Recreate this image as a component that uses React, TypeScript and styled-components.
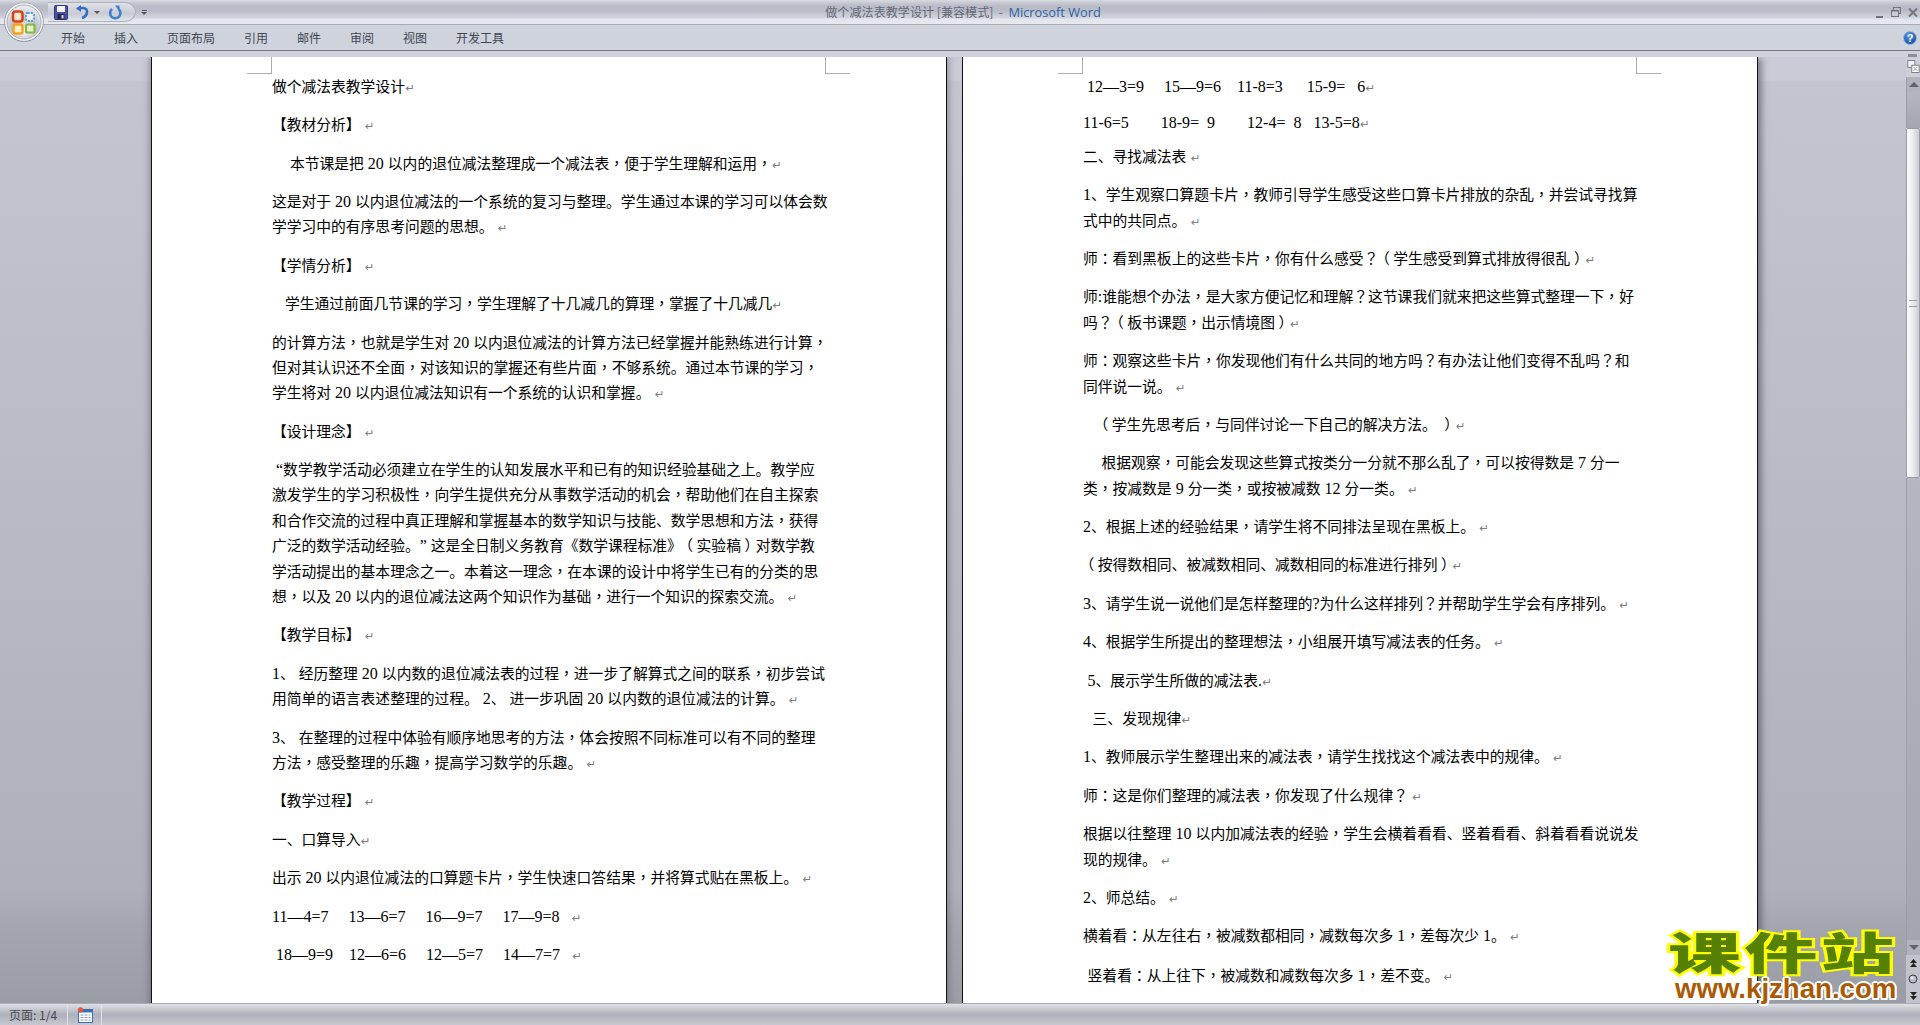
import React from "react";
import styled, { createGlobalStyle } from "styled-components";

const Global = createGlobalStyle`
  html, body { margin: 0; padding: 0; height: 100%; overflow: hidden; background: #c9ccd6; }
  #root { height: 100%; }
`;

const UI_FONT = `"Noto Sans CJK SC", "Noto Sans", sans-serif`;

const Window = styled.div`
  position: relative;
  height: 100vh;
  display: flex;
  flex-direction: column;
  overflow: hidden;
  font-family: ${UI_FONT};
`;

const TitleBar = styled.header`
  height: 24px;
  flex: none;
  display: grid;
  grid-template-columns: 1fr auto 1fr;
  align-items: center;
  border-bottom: 1px solid #a9abb3;
  background: linear-gradient(#d8dae1 0, #c6c9d2 3px, #b9bcc7 6px, #babdc8 11px, #c9ccd6 15px, #d2d5de 18px, #e3e6ed 19px, #e6e8ef 24px);
`;

const QuickBar = styled.div`
  display: flex;
  align-items: center;
  height: 20px;
  margin-left: 48px;
`;

const QuickPill = styled.div`
  width: 88px;
  height: 20px;
  box-sizing: border-box;
  padding-left: 6px;
  display: flex;
  align-items: center;
  border: 1px solid #b0b3bd;
  border-left: 0;
  border-radius: 0 11px 11px 0 / 0 10px 10px 0;
  background: linear-gradient(#dfe1e8, #ccced8 50%, #c9ccd5 60%, #e4e6ec);
`;

const QuickGap = styled.span<{ $size: number }>`
  flex: none;
  width: ${(p) => p.$size}px;
`;

const TinyCaret = styled.span<{ $left?: number }>`
  display: block;
  width: 0;
  height: 0;
  margin-left: ${(p) => p.$left ?? 0}px;
  border-left: 3px solid transparent;
  border-right: 3px solid transparent;
  border-top: 3px solid #555;
`;

const CustomizeMark = styled.div`
  margin-left: 5px;
  display: flex;
  flex-direction: column;
  align-items: center;
  gap: 1px;
  &::before {
    content: "";
    width: 5px;
    height: 1px;
    background: #555;
  }
`;

const TitleText = styled.div`
  padding-left: 6px;
  font-size: 12.1px;
  line-height: 24px;
  color: #626874;
  white-space: pre;
`;

const AppName = styled.span`
  font-family: "Open Sans", sans-serif;
  font-size: 12.8px;
  color: #2e63a4;
`;

const WindowControls = styled.div`
  justify-self: end;
  display: flex;
  align-items: center;
  gap: 7px;
  padding-right: 2px;
  height: 24px;
`;

const TabRow = styled.nav`
  height: 26px;
  flex: none;
  box-sizing: border-box;
  display: flex;
  align-items: center;
  gap: 29px;
  padding: 0 3px 0 61px;
  background: #cfd3dc;
  border-bottom: 1px solid #75777d;
`;

const Tab = styled.span`
  font-size: 12px;
  color: #3f4652;
  line-height: 26px;
`;

const HelpButton = styled.div`
  margin-left: auto;
  width: 14px;
  height: 14px;
  border-radius: 50%;
  border: 1px solid #8fb4e4;
  box-sizing: border-box;
  background: radial-gradient(circle at 40% 30%, #5d9be6, #1c57ae 70%);
  color: #fff;
  font: bold 11px/12px "Liberation Sans", sans-serif;
  text-align: center;
`;

const RibbonFoot = styled.div`
  height: 6px;
  flex: none;
  display: flex;
  justify-content: flex-end;
  align-items: flex-end;
  padding-right: 3px;
  background: #cfd2da;
`;

const SplitDash = styled.div`
  width: 9px;
  height: 3px;
  background: #8b8e96;
`;

const Main = styled.main`
  flex: 1;
  min-height: 0;
  display: flex;
`;

const Workspace = styled.section`
  flex: 1;
  min-width: 0;
  display: flex;
  justify-content: center;
  gap: 15px;
  padding-left: 3px;
  overflow: hidden;
  background: linear-gradient(#c9ccd6 0, #c9ccd6 23px, #c3c6d0 24px, #aeb0bb 88%, #a3a5af 92%, #9a9ca6 100%);
`;

const Page = styled.article<{ $shadow: string }>`
  position: relative;
  flex: none;
  width: 796px;
  min-height: 960px;
  box-sizing: border-box;
  padding: 17.8px 119px 0 120px;
  background: #fff;
  border: solid #111;
  border-width: 0 1px;
  box-shadow: ${(p) => p.$shadow};
  font-family: "Liberation Serif", "Noto Sans CJK SC", serif;
  font-size: 14.78px;
  line-height: 25.4px;
  color: #000;
  text-spacing-trim: space-all;
  text-autospace: no-autospace;
`;

const CropMark = styled.i<{ $side: "left" | "right" }>`
  position: absolute;
  top: 0;
  left: ${(p) => (p.$side === "left" ? 95 : 673)}px;
  width: 24px;
  height: 16px;
  border-bottom: 1px solid #a9adb4;
  ${(p) => (p.$side === "left" ? "border-right" : "border-left")}: 1px solid #a9adb4;
`;

const Para = styled.div<{ $gap: number }>`
  margin-bottom: ${(p) => p.$gap}px;
`;

const Line = styled.div<{ $indent: number }>`
  white-space: pre;
  height: 25.4px;
  padding-left: ${(p) => p.$indent}px;
`;

const Latin = styled.span`
  font-size: 16px;
  line-height: 0;
`;

/* Word draws these full-width marks in the middle of their cell */
const CentredMark = styled.span`
  font-family: "Noto Sans CJK TC", "Noto Sans CJK SC", serif;
  line-height: 0;
`;

const Paren = styled.span<{ $shift: number }>`
  display: inline-block;
  line-height: 0;
  transform: translateX(${(p) => p.$shift}px);
`;

const Mark = styled.span`
  font-family: "DejaVu Sans", sans-serif;
  font-size: 11.5px;
  line-height: 0;
  color: #7d7d7d;
`;

const ScrollRail = styled.aside`
  flex: none;
  width: 14px;
  display: flex;
  flex-direction: column;
  background: #ccd0d8;
`;

const RulerButton = styled.div`
  flex: none;
  height: 17px;
  margin-top: 3px;
  display: flex;
  justify-content: center;
  align-items: flex-start;
`;

const ArrowBox = styled.div<{ $dir: "up" | "down" }>`
  flex: none;
  height: 15px;
  display: flex;
  justify-content: center;
  align-items: center;
  background: #b0b3be;
  border-left: 1px solid #9b9ea9;
  &::after {
    content: "";
    border-left: 5px solid transparent;
    border-right: 5px solid transparent;
    ${(p) => (p.$dir === "up" ? "border-bottom" : "border-top")}: 5px solid #5f626b;
  }
`;

const Track = styled.div<{ $size?: number }>`
  flex: ${(p) => (p.$size ? `none` : 1)};
  height: ${(p) => (p.$size ? `${p.$size}px` : "auto")};
  border-left: 1px solid #9b9ea9;
  background: linear-gradient(#b4b7c2, #a3a5b0);
`;

const Thumb = styled.div`
  flex: none;
  height: 350px;
  box-sizing: border-box;
  display: flex;
  align-items: center;
  justify-content: center;
  border: 1px solid #9a9da6;
  border-radius: 2px;
  background: linear-gradient(90deg, #fdfdfe, #eceef2 45%, #c9ccd4);
  &::after {
    content: "";
    width: 8px;
    height: 5px;
    border: solid #9a9da6;
    border-width: 1px 0;
  }
`;

const NavButton = styled.div`
  flex: none;
  height: 16px;
  display: flex;
  justify-content: center;
  align-items: center;
  background: #c0c3cc;
`;

const StatusBar = styled.footer`
  flex: none;
  height: 22px;
  box-sizing: border-box;
  display: flex;
  border-top: 1px solid #a9abb2;
  background: linear-gradient(#dfe1e6, #c6c8d0 25%, #aeb0bb 50%, #b6b8c3 70%, #c6c8d1);
`;

const StatusItem = styled.div<{ $width: number }>`
  width: ${(p) => p.$width}px;
  box-sizing: border-box;
  padding-left: 9px;
  display: flex;
  align-items: center;
  border-right: 1px solid #e1e3e8;
  font-size: 12px;
  color: #464a52;
  white-space: pre;
`;

const OfficeButton = styled.div`
  position: absolute;
  left: 4px;
  top: 2px;
  width: 40px;
  height: 40px;
`;

const Watermark = styled.div`
  position: absolute;
  left: 1668px;
  top: 925px;
  width: 240px;
  pointer-events: none;
`;

const WatermarkTitle = styled.div`
  width: 140px;
  height: 53px;
  transform: scaleX(1.66);
  transform-origin: 0 0;
  font-family: "Noto Sans CJK SC", sans-serif;
  font-weight: 900;
  font-size: 44px;
  line-height: 53px;
  letter-spacing: 2px;
  white-space: pre;
  color: #558000;
  -webkit-text-stroke: 4px #ffff00;
  paint-order: stroke fill;
`;

const WatermarkUrl = styled.div`
  padding-left: 7px;
  font-family: "Liberation Sans", sans-serif;
  font-weight: bold;
  font-size: 27.6px;
  line-height: 22px;
  color: #aa5a05;
  text-shadow: 2px 0 0 #fff, -2px 0 0 #fff, 0 2px 0 #fff, 0 -2px 0 #fff, 1.5px 1.5px 0 #fff, -1.5px 1.5px 0 #fff, 1.5px -1.5px 0 #fff, -1.5px -1.5px 0 #fff;
`;

type P = { lines: string[]; indent?: number; gap?: number };

const LEFT: P[] = [
  { lines: ["做个减法表教学设计"] },
  { lines: ["【教材分析】 "] },
  { lines: ["本节课是把 20 以内的退位减法整理成一个减法表，便于学生理解和运用，"], indent: 18 },
  { lines: ["这是对于 20 以内退位减法的一个系统的复习与整理。学生通过本课的学习可以体会数", "学学习中的有序思考问题的思想。 "] },
  { lines: ["【学情分析】 "] },
  { lines: ["学生通过前面几节课的学习，学生理解了十几减几的算理，掌握了十几减几"], indent: 13 },
  {
    lines: [
      "的计算方法，也就是学生对 20 以内退位减法的计算方法已经掌握并能熟练进行计算，",
      "但对其认识还不全面，对该知识的掌握还有些片面，不够系统。通过本节课的学习，",
      "学生将对 20 以内退位减法知识有一个系统的认识和掌握。 ",
    ],
  },
  { lines: ["【设计理念】 "] },
  {
    lines: [
      " “数学教学活动必须建立在学生的认知发展水平和已有的知识经验基础之上。教学应",
      "激发学生的学习积极性，向学生提供充分从事数学活动的机会，帮助他们在自主探索",
      "和合作交流的过程中真正理解和掌握基本的数学知识与技能、数学思想和方法，获得",
      "广泛的数学活动经验。” 这是全日制义务教育《数学课程标准》（实验稿）对数学教",
      "学活动提出的基本理念之一。本着这一理念，在本课的设计中将学生已有的分类的思",
      "想，以及 20 以内的退位减法这两个知识作为基础，进行一个知识的探索交流。 ",
    ],
  },
  { lines: ["【教学目标】 "] },
  {
    lines: [
      "1、 经历整理 20 以内数的退位减法表的过程，进一步了解算式之间的联系，初步尝试",
      "用简单的语言表述整理的过程。 2、 进一步巩固 20 以内数的退位减法的计算。 ",
    ],
  },
  { lines: ["3、 在整理的过程中体验有顺序地思考的方法，体会按照不同标准可以有不同的整理", "方法，感受整理的乐趣，提高学习数学的乐趣。 "] },
  { lines: ["【教学过程】 "] },
  { lines: ["一、口算导入"] },
  { lines: ["出示 20 以内退位减法的口算题卡片，学生快速口答结果，并将算式贴在黑板上。 "] },
  { lines: ["11—4=7     13—6=7     16—9=7     17—9=8   "] },
  { lines: [" 18—9=9    12—6=6     12—5=7     14—7=7   "] },
];

const RIGHT: P[] = [
  { lines: [" 12—3=9     15—9=6    11-8=3      15-9=   6"], gap: 10.6 },
  { lines: ["11-6=5        18-9=  9        12-4=  8   13-5=8"], gap: 8.6 },
  { lines: ["二、寻找减法表 "] },
  { lines: ["1、学生观察口算题卡片，教师引导学生感受这些口算卡片排放的杂乱，并尝试寻找算", "式中的共同点。 "] },
  { lines: ["师：看到黑板上的这些卡片，你有什么感受？（学生感受到算式排放得很乱）"] },
  { lines: ["师:谁能想个办法，是大家方便记忆和理解？这节课我们就来把这些算式整理一下，好", "吗？（板书课题，出示情境图）"] },
  { lines: ["师：观察这些卡片，你发现他们有什么共同的地方吗？有办法让他们变得不乱吗？和", "同伴说一说。 "] },
  { lines: ["（学生先思考后，与同伴讨论一下自己的解决方法。 ）"], indent: 14 },
  { lines: ["根据观察，可能会发现这些算式按类分一分就不那么乱了，可以按得数是 7 分一", "类，按减数是 9 分一类，或按被减数 12 分一类。 "], indent: 18.4 },
  { lines: ["2、根据上述的经验结果，请学生将不同排法呈现在黑板上。 "] },
  { lines: ["（按得数相同、被减数相同、减数相同的标准进行排列）"] },
  { lines: ["3、请学生说一说他们是怎样整理的?为什么这样排列？并帮助学生学会有序排列。 "] },
  { lines: ["4、根据学生所提出的整理想法，小组展开填写减法表的任务。 "] },
  { lines: ["5、展示学生所做的减法表."], indent: 4.6 },
  { lines: ["三、发现规律"], indent: 9.6 },
  { lines: ["1、教师展示学生整理出来的减法表，请学生找找这个减法表中的规律。 "] },
  { lines: ["师：这是你们整理的减法表，你发现了什么规律？ "] },
  { lines: ["根据以往整理 10 以内加减法表的经验，学生会横着看看、竖着看看、斜着看看说说发", "现的规律。 "] },
  { lines: ["2、师总结。 "] },
  { lines: ["横着看：从左往右，被减数都相同，减数每次多 1，差每次少 1。 "], gap: 14 },
  { lines: ["竖着看：从上往下，被减数和减数每次多 1，差不变。 "], indent: 4.6 },
];

const TABS = ["开始", "插入", "页面布局", "引用", "邮件", "审阅", "视图", "开发工具"];

function Text({ value }: { value: string }) {
  const parts = value.split(/([0-9A-Za-z—=\-?.:“” ]+|[，：？]|[（）])/);
  return (
    <>
      {parts.map((part, i) => {
        if (i % 2 === 0) return part;
        if (/^[，：？]$/.test(part)) return <CentredMark key={i}>{part}</CentredMark>;
        if (part === "（") return <Paren key={i} $shift={-3.5}>{part}</Paren>;
        if (part === "）") return <Paren key={i} $shift={3.5}>{part}</Paren>;
        return <Latin key={i}>{part}</Latin>;
      })}
    </>
  );
}

function Paragraphs({ items }: { items: P[] }) {
  return (
    <>
      {items.map((para, i) => (
        <Para key={i} $gap={para.gap ?? 13}>
          {para.lines.map((line, j) => (
            <Line key={j} $indent={j === 0 ? para.indent ?? 0 : 0}>
              <Text value={line} />
              {j === para.lines.length - 1 && <Mark>↵</Mark>}
            </Line>
          ))}
        </Para>
      ))}
    </>
  );
}

const SaveIcon = () => (
  <svg width="14" height="15" viewBox="0 0 14 15">
    <rect x="0.5" y="0.5" width="13" height="14" rx="1" fill="#4a4fa8" stroke="#33366f" />
    <rect x="3" y="1" width="8" height="6" fill="#f2f3f8" />
    <rect x="3.5" y="9" width="7" height="5.5" fill="#23264f" />
    <rect x="7.5" y="10" width="2" height="3.5" fill="#d5d7e6" />
  </svg>
);

const UndoIcon = () => (
  <svg width="14" height="15" viewBox="0 0 14 15">
    <path d="M6 13 C12 11 13 3 7 3 H3" fill="none" stroke="#2f6fc4" strokeWidth="2.6" />
    <path d="M5 0 V7 L0 3.5 Z" fill="#2f6fc4" />
  </svg>
);

const RedoIcon = () => (
  <svg width="14" height="15" viewBox="0 0 14 15">
    <path d="M4 4 A5.2 5.2 0 1 0 10.5 4" fill="none" stroke="#3f7fd0" strokeWidth="2.6" />
    <path d="M7 0.5 L11.5 0.5 V6.5 Z" fill="#3f7fd0" />
  </svg>
);

const MinIcon = () => (
  <svg width="8" height="13" viewBox="0 0 8 13">
    <rect x="0" y="10" width="7" height="2" fill="#6f727a" />
  </svg>
);

const RestoreIcon = () => (
  <svg width="10" height="11" viewBox="0 0 10 11">
    <rect x="2.5" y="0.5" width="7" height="6" fill="none" stroke="#6f727a" />
    <rect x="0.5" y="3.5" width="7" height="6" fill="#c9ccd6" stroke="#6f727a" />
    <rect x="0.5" y="3" width="7" height="1.5" fill="#6f727a" />
  </svg>
);

const CloseIcon = () => (
  <svg width="10" height="11" viewBox="0 0 10 11">
    <path d="M1 1.5 L9 9.5 M9 1.5 L1 9.5" stroke="#75787f" strokeWidth="2" />
  </svg>
);

const OfficeLogo = () => (
  <svg width="40" height="40" viewBox="0 0 40 40">
    <defs>
      <radialGradient id="officeGlass" cx="50%" cy="75%" r="70%">
        <stop offset="0" stopColor="#f7f8fa" />
        <stop offset="0.55" stopColor="#bfc3cc" />
        <stop offset="1" stopColor="#e9ebef" />
      </radialGradient>
      <linearGradient id="officeRim" x1="0" y1="0" x2="0" y2="1">
        <stop offset="0" stopColor="#a6a9b1" />
        <stop offset="1" stopColor="#8a8d95" />
      </linearGradient>
    </defs>
    <circle cx="20" cy="20" r="19.4" fill="#f7f8fa" stroke="url(#officeRim)" />
    <circle cx="20" cy="20" r="17" fill="url(#officeGlass)" stroke="#a8acb5" />
    <rect x="9" y="9.5" width="9.5" height="10" rx="2.5" fill="#fbe6cf" stroke="#d9431b" strokeWidth="2.6" />
    <rect x="22" y="11" width="8" height="8" rx="1.5" fill="#e8f0fa" stroke="#5f95d9" strokeWidth="1.8" strokeDasharray="2 1.4" />
    <rect x="9.5" y="22.5" width="9" height="9" rx="2" fill="#fff1c6" stroke="#f2a41f" strokeWidth="2.4" />
    <rect x="22" y="22.5" width="8.5" height="8" rx="1.5" fill="#e5f2cc" stroke="#86b840" strokeWidth="2.2" />
  </svg>
);

const RulerIcon = () => (
  <svg width="13" height="13" viewBox="0 0 14 15">
    <rect x="0.5" y="0.5" width="8" height="8" fill="#f3f4f7" stroke="#73767e" />
    <rect x="5" y="6" width="8.5" height="8.5" fill="#fbfbfc" stroke="#73767e" />
    <path d="M7 8 L11.5 12.5 M11.5 8 L7 12.5" stroke="#9a9da5" />
  </svg>
);

const PrevIcon = () => (
  <svg width="9" height="9" viewBox="0 0 9 9">
    <path d="M4.5 0 L8 4 H1 Z M4.5 4 L8 8 H1 Z" fill="#222" />
  </svg>
);

const NextIcon = () => (
  <svg width="9" height="9" viewBox="0 0 9 9">
    <path d="M1 1 H8 L4.5 5 Z M1 5 H8 L4.5 9 Z" fill="#222" />
  </svg>
);

const BrowseIcon = () => (
  <svg width="10" height="10" viewBox="0 0 10 10">
    <circle cx="5" cy="5" r="4" fill="#b9bcc4" stroke="#3e4046" />
    <circle cx="4" cy="3.8" r="1.5" fill="#e9ebef" />
  </svg>
);

const MacroIcon = () => (
  <svg width="16" height="16" viewBox="0 0 16 16">
    <rect x="1.5" y="2.5" width="14" height="13" fill="#fff" stroke="#3f6db3" />
    <rect x="1.5" y="2.5" width="14" height="3" fill="#3f6db3" />
    <path d="M3.5 8 H13.5 M3.5 10.5 H13.5 M3.5 13 H13.5" stroke="#7d9bc9" strokeDasharray="3 1" />
    <circle cx="3.5" cy="2.8" r="2.6" fill="#e8563a" />
  </svg>
);

export default function App() {
  return (
    <Window>
      <Global />
      <TitleBar>
        <QuickBar>
          <QuickPill>
            <SaveIcon />
            <QuickGap $size={8} />
            <UndoIcon />
            <TinyCaret $left={4} />
            <QuickGap $size={8} />
            <RedoIcon />
          </QuickPill>
          <CustomizeMark>
            <TinyCaret />
          </CustomizeMark>
        </QuickBar>
        <TitleText>
          做个减法表教学设计 [兼容模式]  -  <AppName>Microsoft Word</AppName>
        </TitleText>
        <WindowControls>
          <MinIcon />
          <RestoreIcon />
          <CloseIcon />
        </WindowControls>
      </TitleBar>
      <TabRow>
        {TABS.map((t) => (
          <Tab key={t}>{t}</Tab>
        ))}
        <HelpButton>?</HelpButton>
      </TabRow>
      <RibbonFoot>
        <SplitDash />
      </RibbonFoot>
      <Main>
        <Workspace>
          <Page $shadow="0 0 7px 1px rgba(70,72,85,0.55)">
            <CropMark $side="left" />
            <CropMark $side="right" />
            <Paragraphs items={LEFT} />
          </Page>
          <Page $shadow="6px 0 6px -2px rgba(70,72,85,0.55)">
            <CropMark $side="left" />
            <CropMark $side="right" />
            <Paragraphs items={RIGHT} />
          </Page>
        </Workspace>
        <ScrollRail>
          <RulerButton>
            <RulerIcon />
          </RulerButton>
          <ArrowBox $dir="up" />
          <Track $size={36} />
          <Thumb />
          <Track />
          <ArrowBox $dir="down" />
          <NavButton>
            <PrevIcon />
          </NavButton>
          <NavButton>
            <BrowseIcon />
          </NavButton>
          <NavButton>
            <NextIcon />
          </NavButton>
        </ScrollRail>
      </Main>
      <StatusBar>
        <StatusItem $width={68}>页面: 1/4</StatusItem>
        <StatusItem $width={34}>
          <MacroIcon />
        </StatusItem>
      </StatusBar>
      <OfficeButton>
        <OfficeLogo />
      </OfficeButton>
      <Watermark>
        <WatermarkTitle>课件站</WatermarkTitle>
        <WatermarkUrl>www.kjzhan.com</WatermarkUrl>
      </Watermark>
    </Window>
  );
}
